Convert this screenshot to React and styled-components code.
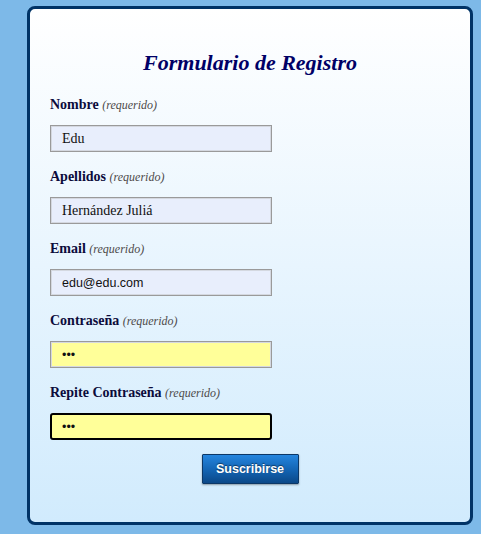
import React from 'react';
import styled, { createGlobalStyle } from 'styled-components';

const GlobalStyle = createGlobalStyle`
  html, body {
    margin: 0;
    background: #7db9e8;
  }
  body {
    font-family: "Liberation Serif", "Times New Roman", serif;
  }
`;

const Page = styled.div`
  padding: 6px 9px 9px 27px;
`;

const Card = styled.form`
  box-sizing: border-box;
  width: 446px;
  height: 519px;
  border: 3px solid #003366;
  border-radius: 8px;
  background: linear-gradient(to bottom, #ffffff 0%, #d1ebfd 100%);
  padding: 41px 20px 0 20px;
`;

const Title = styled.h1`
  margin: 0 0 20.5px;
  text-align: center;
  font-size: 22px;
  line-height: 25px;
  font-weight: bold;
  font-style: italic;
  color: #000066;
`;

const Field = styled.div`
  display: flex;
  flex-direction: column;
  align-items: flex-start;
  margin-bottom: 15.5px;
`;

const Label = styled.label`
  font-size: 14px;
  line-height: 18px;
  font-weight: bold;
  color: #0b0b3b;
  margin-bottom: 11.5px;
`;

const Required = styled.em`
  font-weight: normal;
  font-size: 12px;
  color: #4d4a4a;
`;

const Input = styled.input`
  box-sizing: border-box;
  width: 222px;
  height: 27px;
  margin: 0;
  border: ${(p) => (p.$focused ? '2px solid #000' : '1px solid #9a9a9a')};
  border-radius: ${(p) => (p.$focused ? '3px' : '0')};
  box-shadow: ${(p) => (p.$focused ? 'none' : 'inset 0 0 0 1px #d4d8e0')};
  padding: 0 10px 0 ${(p) => (p.$focused ? '10px' : '11px')};
  background: ${(p) => (p.$password ? '#ffff99' : '#e8eefc')};
  color: #111;
  font-family: ${(p) =>
    p.$sans ? '"Liberation Sans", Arial, sans-serif' : '"Liberation Serif", "Times New Roman", serif'};
  font-size: ${(p) => (p.$sans ? '12.5px' : '14px')};
  outline: none;
`;

const Actions = styled.div`
  display: flex;
  justify-content: center;
  margin-top: -2px;
`;

const Button = styled.button`
  box-sizing: border-box;
  width: 97px;
  height: 30px;
  border: 1px solid #0c3766;
  border-radius: 1px;
  background: linear-gradient(to bottom, #2585de 0%, #1466b6 50%, #0b4888 100%);
  box-shadow: 0 1px 2px rgba(0, 0, 0, 0.35);
  color: #fff;
  font-family: "Liberation Sans", Arial, sans-serif;
  font-weight: bold;
  font-size: 12.5px;
  text-shadow: 0 -1px 1px rgba(0, 0, 0, 0.5);
  cursor: pointer;
`;

const fields = [
  { name: 'nombre', label: 'Nombre', value: 'Edu' },
  { name: 'apellidos', label: 'Apellidos', value: 'Hernández Juliá' },
  { name: 'email', label: 'Email', value: 'edu@edu.com', type: 'email', sans: true },
  { name: 'pass', label: 'Contraseña', value: 'abc', type: 'password', sans: true },
  { name: 'pass2', label: 'Repite Contraseña', value: 'abc', type: 'password', sans: true, focused: true },
];

export default function App() {
  return (
    <>
      <GlobalStyle />
      <Page>
        <Card onSubmit={(e) => e.preventDefault()}>
          <Title>Formulario de Registro</Title>
          {fields.map((f) => (
            <Field key={f.name}>
              <Label htmlFor={f.name}>
                {f.label} <Required>(requerido)</Required>
              </Label>
              <Input
                id={f.name}
                type={f.type || 'text'}
                defaultValue={f.value}
                $sans={f.sans}
                $password={f.type === 'password'}
                $focused={f.focused}
              />
            </Field>
          ))}
          <Actions>
            <Button type="submit">Suscribirse</Button>
          </Actions>
        </Card>
      </Page>
    </>
  );
}
